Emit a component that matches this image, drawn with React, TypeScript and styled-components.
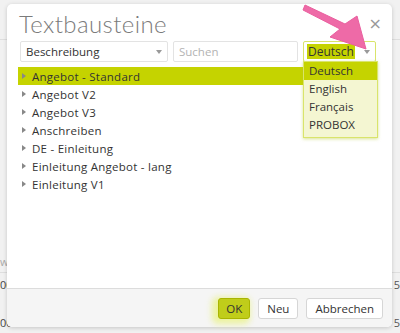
import React from 'react';
import styled, { createGlobalStyle } from 'styled-components';

const GlobalStyle = createGlobalStyle`
  html, body {
    margin: 0;
    padding: 0;
    background: #efefef;
  }
  body {
    font-family: 'Open Sans', 'Liberation Sans', sans-serif;
    color: #333;
  }
`;

const lime = '#c5d300';

const Page = styled.div`
  position: relative;
  width: 400px;
  height: 333px;
  overflow: hidden;
  background: #f1f1f1;
`;

/* the list page behind the dialog */
const Backdrop = styled.div`
  display: flex;
  flex-direction: column;
  height: 100%;
  font-size: 11px;
`;

const BackRow = styled.div<{ $h: number; $line?: boolean }>`
  height: ${(p) => p.$h}px;
  flex: ${(p) => (p.$h === 0 ? 1 : 'none')};
  display: flex;
  justify-content: space-between;
  align-items: center;
  border-bottom: ${(p) => (p.$line ? '1px solid #dedede' : 'none')};
  color: #444;
`;

const BackCell = styled.span<{ $muted?: boolean }>`
  white-space: nowrap;
  color: ${(p) => (p.$muted ? '#aaa' : '#444')};
`;

const BackRight = styled.span`
  color: #555;
`;

const Modal = styled.div`
  position: absolute;
  left: 7px;
  top: 4px;
  width: 385px;
  height: 323px;
  display: flex;
  flex-direction: column;
  background: #fff;
  border-radius: 5px;
  box-shadow: 0 1px 4px rgba(0, 0, 0, 0.18);
`;

const Header = styled.div`
  display: flex;
  justify-content: space-between;
  align-items: flex-start;
  padding: 6px 10px 0 12px;
  height: 30px;
`;

const Title = styled.h1`
  margin: 0;
  font-family: 'Lato', 'Open Sans', sans-serif;
  font-weight: 300;
  font-size: 24px;
  letter-spacing: 0.4px;
  line-height: 28px;
  color: #7b7b7b;
`;

const Close = styled.span`
  font-size: 16px;
  line-height: 16px;
  margin-top: 6px;
  color: #999;
  font-family: 'DejaVu Sans', sans-serif;
`;

const Toolbar = styled.div`
  display: flex;
  gap: 5px;
  padding: 1px 0 0 13px;
  height: 21px;
`;

const Field = styled.div<{ $w: number; $active?: boolean }>`
  position: relative;
  width: ${(p) => p.$w}px;
  box-sizing: border-box;
  display: flex;
  align-items: center;
  justify-content: space-between;
  padding: 0 5px 0 ${(p) => (p.$active ? 3 : 5)}px;
  border: 1px solid ${(p) => (p.$active ? '#d9e46b' : '#e3e3e3')};
  border-radius: 2px;
  font-size: 11.5px;
  color: #333;
  background: #fff;
`;

const Placeholder = styled.span`
  color: #b3b3b3;
`;

const Selected = styled.span`
  background: ${lime};
  padding: 0 1px;
  line-height: 15px;
  font-size: 12px;
`;

const Caret = styled.span`
  width: 0;
  height: 0;
  border-left: 3px solid transparent;
  border-right: 3px solid transparent;
  border-top: 4px solid #999;
`;

const Tree = styled.ul`
  list-style: none;
  margin: 5px 0 0 11px;
  padding: 0;
  width: 357px;
  flex: 1;
`;

const Node = styled.li<{ $selected?: boolean }>`
  display: flex;
  align-items: center;
  gap: 6px;
  height: 18px;
  padding-left: 4px;
  font-size: 11.5px;
  letter-spacing: 0.25px;
  color: #333;
  background: ${(p) => (p.$selected ? lime : 'transparent')};
`;

const Twisty = styled.span`
  width: 0;
  height: 0;
  border-top: 3px solid transparent;
  border-bottom: 3px solid transparent;
  border-left: 4px solid #888;
`;

const Footer = styled.div`
  height: 38px;
  display: flex;
  justify-content: flex-end;
  align-items: center;
  gap: 8px;
  padding-right: 9px;
  border-top: 1px solid #dcdcdc;
  background: #f5f5f5;
  border-radius: 0 0 5px 5px;
`;

const Button = styled.button<{ $primary?: boolean }>`
  height: 21px;
  padding: 0 ${(p) => (p.$primary ? 7 : 8)}px;
  font-family: inherit;
  font-size: 11.5px;
  border-radius: 3px;
  border: 1px solid ${(p) => (p.$primary ? '#a9b500' : '#d6d6d6')};
  background: ${(p) => (p.$primary ? '#c0cd1a' : '#fff')};
  color: #333;
  box-shadow: ${(p) => (p.$primary ? '-3px 2px 6px 3px rgba(232, 242, 130, 0.75)' : 'none')};
`;

const Menu = styled.ul`
  position: absolute;
  left: -1px;
  top: 19px;
  width: 73px;
  margin: 0;
  padding: 0 0 3px;
  list-style: none;
  background: #f4f6d2;
  border: 1px solid #d9e46b;
  box-shadow: 0 1px 3px rgba(180, 200, 40, 0.5);
  z-index: 2;
`;

const MenuItem = styled.li<{ $on?: boolean }>`
  height: 18px;
  line-height: 18px;
  padding-left: 5px;
  font-size: 11.5px;
  color: #333;
  background: ${(p) => (p.$on ? lime : 'transparent')};
`;

const Arrow = styled.svg`
  position: absolute;
  left: 285px;
  top: 0;
  z-index: 3;
  pointer-events: none;
`;

const items = [
  'Angebot - Standard',
  'Angebot V2',
  'Angebot V3',
  'Anschreiben',
  'DE - Einleitung',
  'Einleitung Angebot - lang',
  'Einleitung V1',
];

export default function App() {
  return (
    <Page>
      <GlobalStyle />
      <Backdrop>
        <BackRow $h={39} $line />
        <BackRow $h={0} />
        <BackRow $h={22} $line>
          <BackCell $muted>w</BackCell>
        </BackRow>
        <BackRow $h={22}>
          <BackCell>00</BackCell>
          <BackRight>5</BackRight>
        </BackRow>
        <BackRow $h={16} />
        <BackRow $h={22}>
          <BackCell>00</BackCell>
          <BackRight>5</BackRight>
        </BackRow>
      </Backdrop>
      <Modal>
        <Header>
          <Title>Textbausteine</Title>
          <Close>×</Close>
        </Header>
        <Toolbar>
          <Field $w={148}>
            <span>Beschreibung</span>
            <Caret />
          </Field>
          <Field $w={125}>
            <Placeholder>Suchen</Placeholder>
          </Field>
          <Field $w={73} $active>
            <Selected>Deutsch</Selected>
            <Caret />
            <Menu>
              <MenuItem $on>Deutsch</MenuItem>
              <MenuItem>English</MenuItem>
              <MenuItem>Français</MenuItem>
              <MenuItem>PROBOX</MenuItem>
            </Menu>
          </Field>
        </Toolbar>
        <Tree>
          {items.map((t, i) => (
            <Node key={t} $selected={i === 0}>
              <Twisty />
              {t}
            </Node>
          ))}
        </Tree>
        <Footer>
          <Button $primary>OK</Button>
          <Button>Neu</Button>
          <Button>Abbrechen</Button>
        </Footer>
      </Modal>
      <Arrow width="100" height="60" viewBox="0 0 100 60">
        <path
          d="M20 5 L60 24 L72 16 L81 49 L45 37 L55 29 L18 10 Z"
          fill="#ee6aa7"
          stroke="#ea5f9f"
          strokeWidth="1"
          strokeLinejoin="round"
        />
      </Arrow>
    </Page>
  );
}
